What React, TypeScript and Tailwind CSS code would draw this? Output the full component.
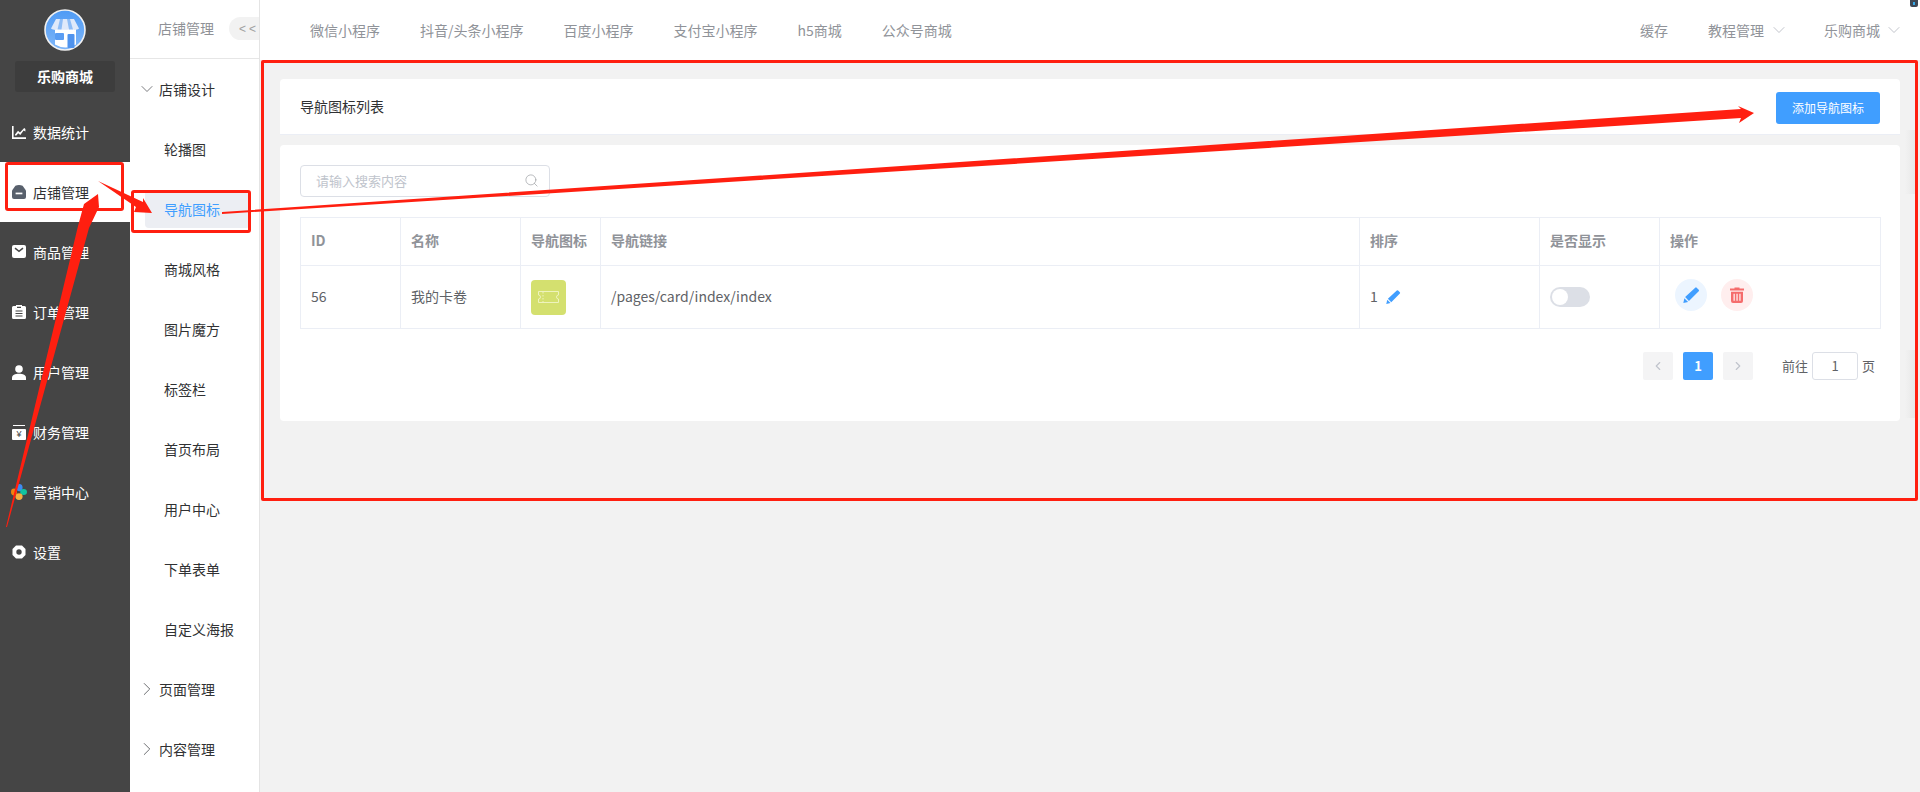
import React from "react";
import { ChevronDown, ChevronRight, ChevronLeft, Search } from "lucide-react";

const font = "font-['Noto_Sans_CJK_SC','Noto_Sans',sans-serif]";

function ChartIcon() {
  return (
    <svg width="14" height="14" viewBox="0 0 14 14" fill="#fff">
      <path d="M0 1h1.6v11.2H14V14H0z" />
      <path d="M3 9.500 6 5.800l2 1.800L12.200 3 13.400 4v2.600L11.600 5.400 8.300 10 6.200 8.200 4.400 10.600H3z" />
    </svg>
  );
}

function StoreIcon() {
  return (
    <svg width="14" height="14" viewBox="0 0 14 14">
      <path d="M0 5.400 3.400.8C5.600-.2 8.400-.2 10.600.8L14 5.400v6.600a2 2 0 0 1-2 2H2a2 2 0 0 1-2-2z" fill="#58606c" />
      <rect x="3.600" y="7.600" width="6.800" height="1.700" fill="#fff" />
    </svg>
  );
}

function MailIcon() {
  return (
    <svg width="14" height="14" viewBox="0 0 14 14">
      <rect width="14" height="13" rx="2" fill="#fff" />
      <path d="M3 3.200 7 6.400l4-3.200" fill="none" stroke="#454545" strokeWidth="1.500" />
    </svg>
  );
}

function OrderIcon() {
  return (
    <svg width="14" height="14" viewBox="0 0 14 14">
      <path d="M1.500 1H4V0h6v1h2.500A1.500 1.500 0 0 1 14 2.500v10a1.500 1.500 0 0 1-1.500 1.500h-11A1.500 1.500 0 0 1 0 12.500v-10A1.500 1.500 0 0 1 1.500 1z" fill="#fff" />
      <path d="M5 2.400h4M3.500 6h7M3.500 8.500h7M3.500 11h7" stroke="#454545" strokeWidth="1.200" />
    </svg>
  );
}

function UserIcon() {
  return (
    <svg width="14" height="15" viewBox="0 0 14 15" fill="#fff">
      <circle cx="7" cy="4" r="3.800" />
      <path d="M0 15v-2.200C0 10.200 3 8.800 7 8.800s7 1.400 7 4V15z" />
    </svg>
  );
}

function FinanceIcon() {
  return (
    <div className="flex h-[15px] w-[14px] flex-col justify-between">
      <div className="mx-[1px] h-[1px] bg-white" />
      <div className="flex h-[11px] items-center justify-center rounded-[1px] bg-white font-['Liberation_Sans',sans-serif] text-[9px] leading-none text-[#454545]">
        ¥
      </div>
    </div>
  );
}

function MarketIcon() {
  return (
    <svg width="16" height="16" viewBox="0 0 16 16" className="-ml-[1px]">
      <ellipse cx="8.400" cy="3.600" rx="3.200" ry="3.600" fill="#3d8bf2" />
      <ellipse cx="12.600" cy="8" rx="3.400" ry="3" fill="#12c4a0" />
      <ellipse cx="8" cy="12.600" rx="3.600" ry="3.400" fill="#f5b040" />
      <ellipse cx="3" cy="8" rx="3" ry="3.400" fill="#f0820f" />
    </svg>
  );
}

function GearIcon() {
  return (
    <svg width="14" height="14" viewBox="0 0 14 14">
      <path d="M4 .5h6L13.500 4v6L10 13.500H4L.5 10V4z" fill="#fff" />
      <circle cx="7" cy="7" r="2.700" fill="#454545" />
    </svg>
  );
}

function LogoIcon() {
  return (
    <svg width="42" height="42" viewBox="0 0 42 42">
      <defs>
        <linearGradient id="logoBg" x1="0" y1="0" x2="0" y2="1">
          <stop offset="0" stopColor="#4f9bf5" />
          <stop offset="1" stopColor="#7fb6f8" />
        </linearGradient>
      </defs>
      <circle cx="21" cy="21" r="20" fill="url(#logoBg)" stroke="#f1f1f1" strokeWidth="1.600" />
      <path d="M11 20h21v15.500a20 20 0 0 1-21 0z" fill="#fff" />
      <path d="M12 10h18l5 9.500c-3 2.200-6 1.500-7.500.3-2 1.400-11 1.400-13 0-1.500 1.200-4.500 1.900-7.500-.3z" fill="#dfe9fa" />
      <path d="M16 10h3l-1.500 10.500h-4zM23 10h3l3 10.500h-4z" fill="#8dbcf6" />
      <rect x="11" y="24" width="9" height="7" rx="1" fill="#5a9df3" />
      <rect x="23.500" y="25" width="7" height="14" rx="1" fill="#4f93ee" />
    </svg>
  );
}

function Pencil({ size = 15 }: { size?: number }) {
  return (
    <svg width={size} height={size} viewBox="0 0 16 16" fill="#409eff">
      <path d="M11.500 1.600a1 1 0 0 1 1.400 0l1.900 1.900a1 1 0 0 1 0 1.400L5.600 14 2 10.400z" />
      <path d="M1.300 11.500 4.800 15 .3 16z" />
    </svg>
  );
}

function Trash() {
  return (
    <svg width="14" height="16" viewBox="0 0 14 16" fill="#f56c6c">
      <path d="M4.500 1.500V.5h5v1H14V3.400H0V1.500z" />
      <path d="M1 4.800h12V14a2 2 0 0 1-2 2H3a2 2 0 0 1-2-2zm2.500 2v7h1.300v-7zm2.900 0v7h1.300v-7zm2.900 0v7h1.300v-7z" fillRule="evenodd" />
    </svg>
  );
}

function TicketIcon() {
  return (
    <svg width="21" height="12" viewBox="0 0 21 12" fill="none" stroke="#eef3bd" strokeWidth="1">
      <path d="M.5.500h20v3.500a2 2 0 0 0 0 4v3.500H.5V8a2 2 0 0 0 0-4z" />
      <path d="M5 1v10" strokeDasharray="1.500 1.500" />
    </svg>
  );
}

const mainMenu = [
  { label: "数据统计", icon: <ChartIcon /> },
  { label: "店铺管理", icon: <StoreIcon />, active: true },
  { label: "商品管理", icon: <MailIcon /> },
  { label: "订单管理", icon: <OrderIcon /> },
  { label: "用户管理", icon: <UserIcon /> },
  { label: "财务管理", icon: <FinanceIcon /> },
  { label: "营销中心", icon: <MarketIcon /> },
  { label: "设置", icon: <GearIcon /> },
];

const subMenu = ["轮播图", "导航图标", "商城风格", "图片魔方", "标签栏", "首页布局", "用户中心", "下单表单", "自定义海报"];
const topTabs = ["微信小程序", "抖音/头条小程序", "百度小程序", "支付宝小程序", "h5商城", "公众号商城"];

const th = "border border-[#ebeef5] px-[10px] pb-[2px] text-left text-[14px] font-bold text-[#909399]";
const td = "border border-[#ebeef5] px-[10px] text-[14px] text-[#606266]";

export default function App() {
  return (
    <div className={`relative flex h-[792px] w-[1920px] overflow-hidden bg-[#f2f2f2] ${font}`}>
      {/* main sidebar */}
      <aside className="flex w-[130px] shrink-0 flex-col items-center bg-[#454545]">
        <div className="mt-[9px] h-[42px] w-[42px]">
          <LogoIcon />
        </div>
        <div className="mt-[10px] flex h-[31px] w-[100px] items-center justify-center rounded-[3px] bg-[#3d3d3d] text-[14px] font-bold text-white">
          乐购商城
        </div>
        <nav className="mt-[10px] w-full">
          {mainMenu.map((m) => (
            <div
              key={m.label}
              className={`flex h-[60px] items-center pl-[12px] text-[14px] ${m.active ? "bg-white text-[#303133]" : "text-white"}`}
            >
              <span className="flex w-[21px] items-center">{m.icon}</span>
              {m.label}
            </div>
          ))}
        </nav>
      </aside>

      {/* sub sidebar */}
      <aside className="w-[130px] shrink-0 border-r border-[#e4e4e4] bg-white">
        <div className="flex h-[59px] items-center justify-between border-b border-[#e6e6e6] pb-[1px] pl-[28px]">
          <span className="text-[14px] text-[#8f9196]">店铺管理</span>
          <span className="flex h-[23px] w-[30px] items-center rounded-l-full bg-[#f2f2f2] pl-[10px] font-['Liberation_Sans',sans-serif] text-[12px] tracking-[3px] text-[#a0a0a0]">
            &lt;&lt;
          </span>
        </div>
        <div className="flex h-[60px] items-center pl-[7px] text-[14px] text-[#303133]">
          <ChevronDown size={20} strokeWidth={1} className="mr-[2px] text-[#606266]" />
          店铺设计
        </div>
        {subMenu.map((s, i) => (
          <div key={s} className="flex h-[60px] items-center pl-[15px] text-[14px] text-[#303133]">
            {i === 1 ? (
              <div className="flex h-[38px] w-[105px] items-center rounded-[4px] bg-[#eceef3] pl-[19px] text-[#409eff]">{s}</div>
            ) : (
              <span className="pl-[19px]">{s}</span>
            )}
          </div>
        ))}
        {["页面管理", "内容管理"].map((s) => (
          <div key={s} className="flex h-[60px] items-center pl-[6px] text-[14px] text-[#303133]">
            <ChevronRight size={22} strokeWidth={1} className="mr-[1px] text-[#606266]" />
            {s}
          </div>
        ))}
      </aside>

      {/* content */}
      <div className="flex min-w-0 flex-1 flex-col">
        <header className="flex h-[60px] shrink-0 items-center justify-between bg-white pl-[50px] pr-[16px] text-[14px] text-[#909399]">
          <div className="flex gap-[40px]">
            {topTabs.map((t) => (
              <span key={t}>{t}</span>
            ))}
          </div>
          <div className="flex items-center">
            <span>缓存</span>
            <span className="ml-[40px]">教程管理</span>
            <ChevronDown size={20} strokeWidth={1} className="ml-[5px] text-[#b4b8c0]" />
            <span className="ml-[35px]">乐购商城</span>
            <ChevronDown size={20} strokeWidth={1} className="ml-[4px] text-[#b4b8c0]" />
          </div>
        </header>

        <main className="px-[20px] pt-[19px]">
          <div className="flex h-[56px] items-center justify-between rounded-t-[4px] border-b border-[#ebeef5] bg-white px-[20px]">
            <span className="text-[14px] text-[#303133]">导航图标列表</span>
            <button className="mt-[2px] h-[32px] w-[104px] rounded-[3px] bg-[#409eff] text-[12px] text-white">添加导航图标</button>
          </div>

          <section className="mt-[10px] h-[276px] rounded-[4px] bg-white px-[20px] pt-[20px]">
            <div className="flex h-[32px] w-[250px] items-center justify-between rounded-[4px] border border-[#dcdfe6] pb-[1px] pl-[15px] pr-[10px] text-[13px] text-[#c0c4cc]">
              请输入搜索内容
              <Search size={15} strokeWidth={1} className="text-[#909399]" />
            </div>

            <table className="mt-[20px] w-[1580px] table-fixed border-collapse">
              <colgroup>
                <col className="w-[100px]" />
                <col className="w-[120px]" />
                <col className="w-[80px]" />
                <col className="w-[759px]" />
                <col className="w-[180px]" />
                <col className="w-[120px]" />
                <col className="w-[221px]" />
              </colgroup>
              <thead>
                <tr className="h-[48px]">
                  <th className={th}>ID</th>
                  <th className={th}>名称</th>
                  <th className={th}>导航图标</th>
                  <th className={th}>导航链接</th>
                  <th className={th}>排序</th>
                  <th className={th}>是否显示</th>
                  <th className={th}>操作</th>
                </tr>
              </thead>
              <tbody>
                <tr className="h-[63px]">
                  <td className={`${td} pb-[2px]`}>56</td>
                  <td className={`${td} pb-[2px]`}>我的卡卷</td>
                  <td className={td}>
                    <div className="flex h-[35px] w-[35px] items-center justify-center rounded-[4px] bg-[#d4e06f]">
                      <TicketIcon />
                    </div>
                  </td>
                  <td className={`${td} pb-[2px]`}>/pages/card/index/index</td>
                  <td className={`${td} pb-[2px]`}>
                    <div className="flex items-center gap-[8px]">
                      1
                      <Pencil />
                    </div>
                  </td>
                  <td className={td}>
                    <div className="flex h-[20px] w-[40px] items-center rounded-full bg-[#dcdfe6] pl-[2px]">
                      <div className="h-[16px] w-[16px] rounded-full bg-white" />
                    </div>
                  </td>
                  <td className={td}>
                    <div className="-mt-[5px] ml-[5px] flex gap-[14px]">
                      <div className="flex h-[32px] w-[32px] items-center justify-center rounded-full bg-[#ecf5ff]">
                        <Pencil size={17} />
                      </div>
                      <div className="flex h-[32px] w-[32px] items-center justify-center rounded-full bg-[#fee]">
                        <Trash />
                      </div>
                    </div>
                  </td>
                </tr>
              </tbody>
            </table>

            <div className="mt-[23px] flex items-center justify-end pr-[5px] text-[13px] text-[#606266]">
              <div className="flex h-[28px] w-[30px] items-center justify-center rounded-[2px] bg-[#f4f4f5] text-[#c0c4cc]">
                <ChevronLeft size={14} strokeWidth={2} />
              </div>
              <div className="ml-[10px] flex h-[28px] w-[30px] items-center justify-center rounded-[2px] bg-[#409eff] font-bold text-white">1</div>
              <div className="ml-[10px] flex h-[28px] w-[30px] items-center justify-center rounded-[2px] bg-[#f4f4f5] text-[#c0c4cc]">
                <ChevronRight size={14} strokeWidth={2} />
              </div>
              <span className="ml-[29px]">前往</span>
              <div className="ml-[4px] flex h-[28px] w-[46px] items-center justify-center rounded-[3px] border border-[#dcdfe6]">1</div>
              <span className="ml-[4px]">页</span>
            </div>
          </section>
        </main>
      </div>

      {/* faint shadows at the right edge */}
      <div className="absolute right-[3px] top-[130px] h-[64px] w-[12px] bg-gradient-to-l from-black/5 to-transparent" />
      <div className="absolute right-[3px] top-[350px] h-[68px] w-[12px] bg-gradient-to-l from-black/5 to-transparent" />

      {/* annotations drawn over the page */}
      <div className="absolute left-[5px] top-[162px] h-[49px] w-[119px] rounded-[3px] border-[3px] border-[#ff1f10]" />
      <div className="absolute left-[131px] top-[190px] h-[43px] w-[120px] rounded-[3px] border-[3px] border-[#ff1f10]" />
      <div className="absolute left-[261px] top-[60px] h-[441px] w-[1657px] rounded-[2px] border-[3px] border-[#ff1f10]" />
      <svg className="absolute left-0 top-0" width="1920" height="792" fill="#ff1f10">
        <polygon points="6,527 78,226 84,204 98,194 99,207 89,228 7,527" />
        <polygon points="98,181 143,202 143,198 152,213 134,212 136,207" />
        <polygon points="222,212 1741,109 1738,106 1754,113 1739,123 1741,118 222,214" />
      </svg>
      <div className="absolute left-[1910px] top-0 flex h-[7px] w-[8px] items-center justify-center rounded-b-[2px] bg-[#3d4654]">
        <div className="h-[3px] w-[2px] bg-[#35a7e8]" />
      </div>
    </div>
  );
}
